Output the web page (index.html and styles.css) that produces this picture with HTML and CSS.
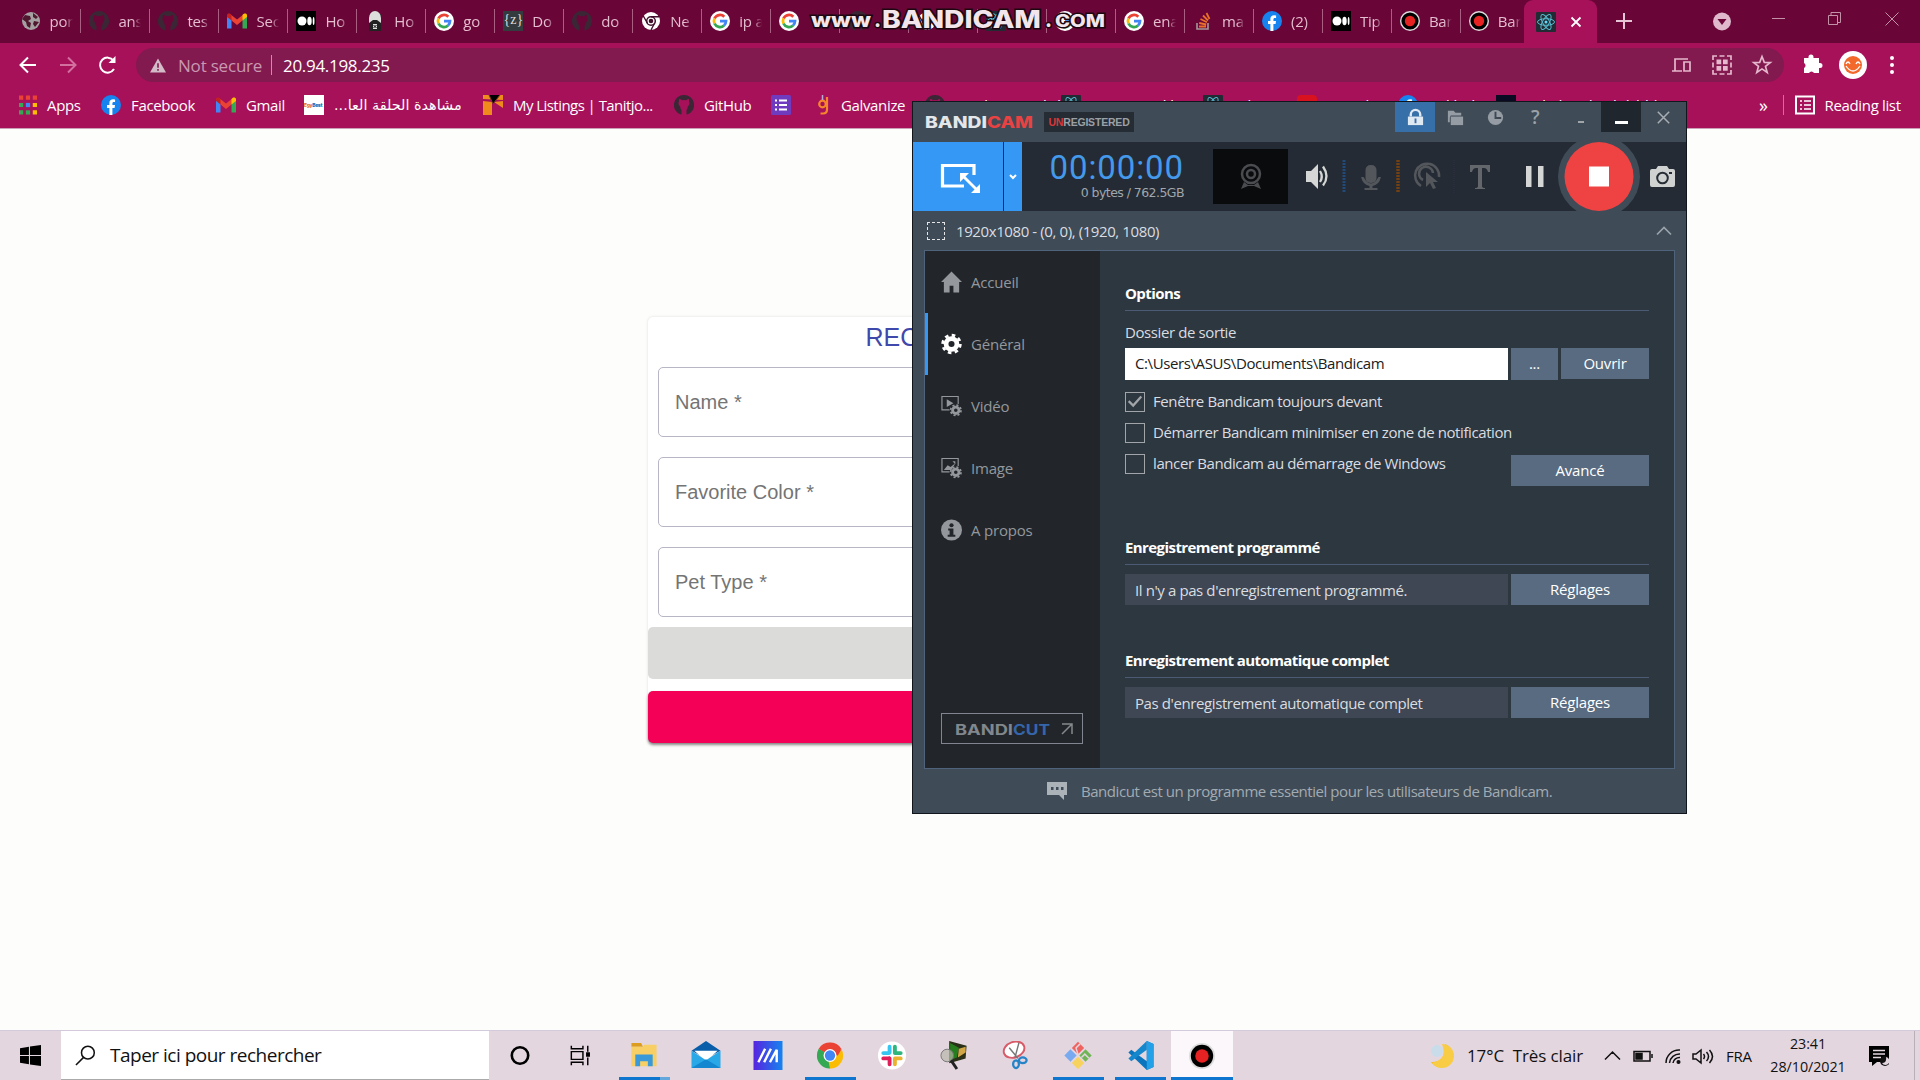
FILE: index.html
```html
<!DOCTYPE html>
<html lang="fr">
<head>
<meta charset="utf-8">
<title>20.94.198.235</title>
<link rel="stylesheet" href="styles.css">
</head>
<body>
<svg class="defs" aria-hidden="true">
  <symbol id="github" viewBox="0 0 20 20"><path fill="#3a2634" d="M10 0a10 10 0 0 0-3.200 19.500c.5.100.7-.2.7-.5v-4c-1-1.300-1.300-2-1-3C4.500 10 4 8 5 6.500c-.2-.9-.1-1.800.2-2.500 1 0 2 .6 2.600 1.200a9 9 0 0 1 4.400 0C13 4.600 14 4 14.800 4c.3.700.4 1.600.2 2.500 1 1.500.5 3.500-1.500 5.500.3 1 0 1.700-1 3v4c0 .3.200.6.700.5A10 10 0 0 0 10 0z"/></symbol>
  <symbol id="gmail" viewBox="0 0 20 16"><path fill="#4285f4" d="M0 2v13.500h4.500V6z"/><path fill="#34a853" d="M20 2v13.500h-4.500V6z"/><path fill="#ea4335" d="M3 1l7 5.500L17 1l-1.500 6.500L10 12 4.500 7.500z"/><path fill="#c5221f" d="M0 2.500C0 .5 2 0 3.500 1l1 1v5.500L0 4z"/><path fill="#fbbc04" d="M20 2.500C20 .5 18 0 16.500 1l-1 1v5.500L20 4z"/></symbol>
  <symbol id="google" viewBox="0 0 20 20"><circle cx="10" cy="10" r="10" fill="#fff"/><g fill="none" stroke-width="2.800"><path stroke="#ea4335" d="M4.500 7.500A6 6 0 0 1 14.300 5.800"/><path stroke="#fbbc04" d="M4.500 12.500a6 6 0 0 1 0-5"/><path stroke="#34a853" d="M14 14.500a6 6 0 0 1-9.500-2"/><path stroke="#4285f4" d="M10 10.200h6a6 6 0 0 1-2 4.300"/></g></symbol>
  <symbol id="medium" viewBox="0 0 20 20"><path d="M0 0h20v20H0z"/><circle cx="6" cy="10" r="4.500" fill="#fff"/><ellipse cx="13.500" cy="10" rx="2.200" ry="4.300" fill="#fff"/><ellipse cx="17.600" cy="10" rx=".9" ry="4" fill="#fff"/></symbol>
  <symbol id="rec" viewBox="0 0 20 20"><circle cx="10" cy="10" r="10" fill="#ddd"/><circle cx="10" cy="10" r="8.600"/><circle cx="10" cy="10" r="5.200" fill="#e62222"/></symbol>
  <symbol id="fb" viewBox="0 0 20 20"><circle cx="10" cy="10" r="10" fill="#1683ee"/><path fill="#fff" d="M8.400 20v-7H6v-3h2.400V8c0-2.600 1.500-3.800 3.700-3.800l2 .2V7h-1.200c-1.200 0-1.500.7-1.500 1.400V10H14l-.4 3h-2.200v7z"/></symbol>
  <symbol id="react" viewBox="0 0 20 20"><rect width="20" height="20" rx="1" fill="#222b33"/><g fill="none" stroke="#56bcd0" stroke-width="1"><ellipse cx="10" cy="10" rx="8.500" ry="3.300"/><ellipse cx="10" cy="10" rx="8.500" ry="3.300" transform="rotate(60 10 10)"/><ellipse cx="10" cy="10" rx="8.500" ry="3.300" transform="rotate(120 10 10)"/></g><circle cx="10" cy="10" r="1.500" fill="#61dafb"/></symbol>
  <symbol id="chrome" viewBox="0 0 20 20"><path fill="#ea4335" d="M10 10L1.340 5a10 10 0 0 1 17.320 0z"/><path fill="#fbbc04" d="M10 10l8.660-5A10 10 0 0 1 10 20z"/><path fill="#34a853" d="M10 10v10A10 10 0 0 1 1.340 5z"/><path fill="#ea4335" d="M10 5.200h8.700L16 10h-3z"/><path fill="#34a853" d="M6 7.500L1.340 5 5 12l3 2z"/><path fill="#fbbc04" d="M14.300 7.500L10 20 9 15z"/><circle cx="10" cy="10" r="4.900" fill="#fff"/><circle cx="10" cy="10" r="3.900" fill="#4285f4"/></symbol>
  <symbol id="chromew" viewBox="0 0 20 20"><circle cx="10" cy="10" r="9" fill="#fff"/><circle cx="10" cy="10" r="4.300" fill="none" stroke="#42102c" stroke-width="1.500"/><circle cx="10" cy="10" r="2.300" fill="#42102c"/><path stroke="#42102c" stroke-width="1.400" d="M10 5.700h8M6.300 12L2.300 5M13.700 12L10 19"/></symbol>
  <symbol id="gear" viewBox="0 0 22 22"><circle cx="11" cy="11" r="5.700" fill="none" stroke="currentColor" stroke-width="5"/><circle cx="11" cy="11" r="9.200" fill="none" stroke="currentColor" stroke-width="3" stroke-dasharray="3.700 3.520"/></symbol>
</svg>

<header class="browser">
  <div class="tabs">
    <div class="tab"><svg class="fav" viewBox="0 0 20 20"><circle cx="10" cy="10" r="9" fill="#a5a0a2"/><path fill="#50182f" d="M4 4l5 1 1 3-3 2 3 2-1 5-3-2-1-4-4-3zM12 2l5 4-2 2-3-2zM13 10l5 1-4 5-2-3z"/></svg><span>por</span></div>
    <div class="tab"><svg class="fav"><use href="#github"/></svg><span>ans</span></div>
    <div class="tab"><svg class="fav"><use href="#github"/></svg><span>tes</span></div>
    <div class="tab"><svg class="fav"><use href="#gmail"/></svg><span>Sec</span></div>
    <div class="tab"><svg class="fav"><use href="#medium"/></svg><span>Ho</span></div>
    <div class="tab"><svg class="fav" viewBox="0 0 20 20"><path d="M4 3h12v17H4z" fill="#222"/><path fill="#ddd" d="M4 7a6 7 0 0 1 12 0v5l-4-3H8l-4 3z"/><path d="M8 13h4v5H8z" fill="#ddd"/><path stroke="#111" d="M8.500 14l3 3m0-3l-3 3"/></svg><span>Ho</span></div>
    <div class="tab"><svg class="fav"><use href="#google"/></svg><span>go</span></div>
    <div class="tab"><i class="fav zf">{z}</i><span>Do</span></div>
    <div class="tab"><svg class="fav"><use href="#github"/></svg><span>do</span></div>
    <div class="tab"><svg class="fav"><use href="#chromew"/></svg><span>Ne</span></div>
    <div class="tab"><svg class="fav"><use href="#google"/></svg><span>ip a</span></div>
    <div class="tab"><svg class="fav"><use href="#google"/></svg></div>
    <div class="tab"><svg class="fav"><use href="#github"/></svg></div>
    <div class="tab"><svg class="fav"><use href="#chromew"/></svg></div>
    <div class="tab"><svg class="fav"><use href="#react"/></svg></div>
    <div class="tab"><svg class="fav"><use href="#google"/></svg></div>
    <div class="tab"><svg class="fav"><use href="#google"/></svg><span>ena</span></div>
    <div class="tab"><svg class="fav" viewBox="0 0 20 20"><path fill="none" stroke="#a39a98" stroke-width="1.600" d="M4 12v6h11v-6"/><path stroke="#e8702a" stroke-width="1.800" d="M6 15.500h7M6.200 12l7 1.500M7.500 8l6.500 3.200M10 4.500l5 5M13.500 2l3 6"/></svg><span>ma</span></div>
    <div class="tab"><svg class="fav"><use href="#fb"/></svg><span>(2)</span></div>
    <div class="tab"><svg class="fav"><use href="#medium"/></svg><span>Tip</span></div>
    <div class="tab"><svg class="fav"><use href="#rec"/></svg><span>Ban</span></div>
    <div class="tab last"><svg class="fav"><use href="#rec"/></svg><span>Ban</span></div>
    <div class="tab active"><svg class="fav"><use href="#react"/></svg><svg class="close" viewBox="0 0 12 12"><path d="M1.500 1.500l9 9m0-9l-9 9" stroke="#fff" stroke-width="1.800"/></svg></div>
    <svg class="plus" viewBox="0 0 16 16"><path d="M8 0v16M0 8h16" stroke="#e6c6d6" stroke-width="2"/></svg>
    <svg class="winctl" viewBox="0 0 200 42"><circle cx="22" cy="21.500" r="9" fill="#dfb8cc"/><path fill="#6a0638" d="M17.500 19h9l-4.500 6z"/><g fill="none" stroke="#c392a9" stroke-width="1"><path d="M72 18.500h13M128.500 15.500h9v9h-9zM131 15v-2.500h9.500v10H138M185.500 12.500l13 13m0-13l-13 13"/></g></svg>
    <div class="watermark"><svg viewBox="0 0 300 30"><g class="wm"><text x="4" y="24" font-size="20" textLength="60" lengthAdjust="spacingAndGlyphs">www</text><text x="67" y="24" font-size="20">.</text><text x="75" y="25" font-size="24" textLength="159" lengthAdjust="spacingAndGlyphs">BANDICAM</text><text x="238" y="24" font-size="20">.</text><text x="248" y="24" font-size="17" textLength="50" lengthAdjust="spacingAndGlyphs">COM</text></g></svg></div>
  </div>

  <div class="toolbar">
    <svg class="nav" viewBox="0 0 120 36" fill="none" stroke="#fff" stroke-width="2"><path d="M20 18H5M12 10.500L4.500 18l7.500 7.500"/><path stroke="#d3709e" d="M44 18h15M52 10.500l7.500 7.500-7.500 7.500"/><path d="M98 22a7.500 7.500 0 1 1-.5-8.500"/><path fill="#fff" stroke="none" d="M99.500 9v7h-7z"/></svg>
    <div class="omnibox">
      <svg class="warn" viewBox="0 0 18 16"><path fill="#d3bcc8" d="M9 0l9 16H0z"/><path stroke="#82194f" stroke-width="1.800" d="M9 5.500v5M9 12v2"/></svg>
      <span class="notsec">Not secure</span><i></i><span class="ip">20.94.198.235</span>
      <svg class="omni-icons" viewBox="0 0 100 24" fill="none" stroke="#e5b8cd" stroke-width="1.700"><path d="M18 6H5v12M2 18h10M14 9h6v9h-6z"/><path d="M43 7V3h4M57 3h4v4M43 17v4h4M57 21h4v-4M43 9.500v5M61 9.500v5M49.500 3h5M49.500 21h5"/><path fill="#e5b8cd" stroke="none" d="M46.500 6.500h4.700v4.700h-4.700zM53 6.500h4.700v4.700H53zM46.500 13h4.700v4.700h-4.700zM53 13h4.700v4.700H53z"/><path d="M92 3.500l2.300 5.900 6 .2-4.800 3.800 1.700 6-5.200-3.500-5.200 3.500 1.700-6-4.800-3.800 6-.2z"/></svg>
    </div>
    <svg class="ext" viewBox="0 0 120 36"><path fill="#fff" d="M19 15h4.500v-1a2.500 2.500 0 0 1 5 0v1H34v5h1a2.500 2.500 0 0 1 0 5h-1v5h-5a2.800 2.800 0 0 0-5 0h-5v-5a2.800 2.800 0 0 0 0-5z" transform="translate(1 -4)"/><circle cx="69" cy="18" r="14" fill="#fff"/><circle cx="69" cy="18" r="9" fill="#f3692c"/><path fill="none" stroke="#fff" stroke-width="1.300" d="M62 17q2-4 4 0M72 17q2-4 4 0M62 19q7 10 14 0"/><g fill="#fff"><circle cx="108" cy="11" r="2"/><circle cx="108" cy="18" r="2"/><circle cx="108" cy="25" r="2"/></g></svg>
  </div>

  <nav class="bookmarks">
    <div class="bm"><svg class="ic apps" viewBox="0 0 17 18"><path fill="#ea4335" d="M0 0h4v4H0zM6.500 0h4v4h-4zM13 0h4v4h-4z"/><path fill="#34a853" d="M0 7h4v4H0zM0 14h4v4H0z"/><path fill="#4285f4" d="M6.500 7h4v4h-4z"/><path fill="#fbbc04" d="M13 7h4v4h-4zM13 14h4v4h-4z"/><path fill="#34a853" d="M6.500 14h4v4h-4z"/></svg><span>Apps</span></div>
    <div class="bm"><svg class="ic"><use href="#fb"/></svg><span>Facebook</span></div>
    <div class="bm"><svg class="ic"><use href="#gmail"/></svg><span>Gmail</span></div>
    <div class="bm"><i class="ic egy">Egy<b>Best</b></i><span class="ar" dir="rtl">مشاهدة الحلقة العا...</span></div>
    <div class="bm"><svg class="ic" viewBox="0 0 20 20"><path fill="#ef8b1c" d="M0 0h20v5L0 4zM0 6l9 1v13H0zM11 7l9-1v7z"/><path stroke="#7a3a28" d="M6 0l4 9 7-9"/></svg><span class="tight">My Listings | Tanitjo...</span></div>
    <div class="bm"><svg class="ic"><use href="#github"/></svg><span>GitHub</span></div>
    <div class="bm"><svg class="ic" viewBox="0 0 20 20"><rect width="20" height="20" rx="1.500" fill="#6f3cc0"/><path stroke="#fff" stroke-width="2.200" d="M4 5.500h2M8 5.500h8M4 10h2M8 10h8M4 14.500h2M8 14.500h8"/></svg></div>
    <div class="bm"><svg class="ic gal" viewBox="0 0 15 20" fill="none" stroke="#f5862c" stroke-width="2.200"><circle cx="7" cy="9" r="3.300"/><path d="M11.500 2v12.500q0 4-4 4H5"/><path stroke="#b9a9d8" stroke-width="1.500" d="M7 0v5"/></svg><span>Galvanize</span></div>
    <div class="bm"><svg class="ic"><use href="#github"/></svg><span>&nbsp; mohaimenabd</span></div>
    <div class="bm"><svg class="ic"><use href="#react"/></svg><span>&nbsp; react weekly</span></div>
    <div class="bm"><svg class="ic"><use href="#react"/></svg><span>Nike.js</span></div>
    <div class="bm"><svg class="ic" viewBox="0 0 20 20"><rect width="20" height="20" rx="4" fill="#d8131f"/></svg><span>youtube</span></div>
    <div class="bm"><svg class="ic"><use href="#fb"/></svg><span>Ankh di</span></div>
    <div class="bm"><svg class="ic" viewBox="0 0 20 20"><path fill="#0a0a22" d="M0 0h20v20H0z"/></svg><span>Cykid And Wikdshbb</span></div>
    <div class="bm"><span class="more">»</span><i class="vline"></i><svg class="ic" viewBox="0 0 20 20" fill="none" stroke="#fff" stroke-width="2"><path d="M1 1.500h18v17H1z"/><path d="M5 6h2M9 6h7M5 10h2M9 10h7M5 14h2M9 14h7" stroke-width="1.700"/></svg><span>Reading list</span></div>
  </nav>
</header>

<main class="page">
  <form class="card">
    <h1>RECORD FORM</h1>
    <div class="field">Name *</div>
    <div class="field">Favorite Color *</div>
    <div class="field">Pet Type *</div>
    <div class="btn grey"></div>
    <div class="btn pink"></div>
  </form>
</main>

<section class="bandi">
  <div class="b-title">
    <svg class="b-logo" viewBox="0 0 110 20"><text y="16" font-size="15.500" fill="#e4e7ea" textLength="62" lengthAdjust="spacingAndGlyphs">BANDI</text><text x="62" y="16" font-size="15.500" fill="#e84243" textLength="46" lengthAdjust="spacingAndGlyphs">CAM</text></svg>
    <span class="unreg"><b>UN</b>REGISTERED</span>
    <div class="b-icons">
      <i class="on"><svg viewBox="0 0 20 20"><path fill="#dfe9f2" d="M2 9h16v9H2z"/><path fill="none" stroke="#dfe9f2" stroke-width="2.500" d="M5 9V7a5 5 0 0 1 10 0v2"/><path stroke="#3f6fa6" stroke-width="2" d="M10 11v5"/></svg></i>
      <i><svg viewBox="0 0 20 20" fill="#959ca3"><path d="M2 3h6l2 2h6v3H5l-1 2v5H2z"/><path d="M5 9h13v9H5z"/></svg></i>
      <i><svg viewBox="0 0 20 20"><circle cx="10" cy="10" r="8" fill="#959ca3"/><path fill="none" stroke="#3d4854" stroke-width="2" d="M10 4v6.500h6"/></svg></i>
      <i class="q">?</i>
      <i class="dash"></i>
      <i class="min"></i>
      <i><svg viewBox="0 0 20 20"><path stroke="#a8adb3" stroke-width="1.600" d="M4 4l12 12M16 4L4 16"/></svg></i>
    </div>
  </div>

  <div class="b-tools">
    <div class="target"><svg viewBox="0 0 40 32"><path fill="none" stroke="#fff" stroke-width="3.200" d="M34 13V3.500H2.500V24H24"/><path stroke="#fff" stroke-width="2.800" d="M23 14l14 14"/><path fill="#fff" d="M20 11h9l-9 9zM40 31h-9l9-9z"/></svg></div>
    <div class="drop"><svg viewBox="0 0 10 8"><path fill="none" stroke="#fff" stroke-width="2" d="M2 2l3 3 3-3"/></svg></div>
    <div class="clock"><div class="time">00:00:00</div><div class="size">0 bytes / 762.5GB</div></div>
    <div class="cam"><svg viewBox="0 0 24 28" fill="none" stroke="#4a4c50" stroke-width="2.500"><circle cx="12" cy="11" r="9"/><circle cx="12" cy="11" r="4"/><path fill="#4a4c50" stroke="none" d="M5 19l-3 7 7-3h6l7 3-3-7-4 3H9z"/></svg></div>
    <svg class="tools" viewBox="0 0 398 69">
      <path fill="#d5d7d6" d="M17 29h5l7-7v25l-7-7h-5z"/><path fill="none" stroke="#d5d7d6" stroke-width="2.300" d="M31 29q3.500 5.500 0 11M34 24.500q7 10 0 19"/>
      <path stroke="#224a78" stroke-width="3" stroke-dasharray="2 1" d="M55 18v33"/>
      <g fill="#53575c"><rect x="76.500" y="23" width="11" height="18" rx="5"/><path d="M72 35h2.500q7.500 13 15 0H92q-2 8-8.500 9v2h5v2h-13v-2h5v-2Q74 43 72 35z"/></g>
      <path stroke="#714013" stroke-width="3.500" stroke-dasharray="2 1" d="M109 18v33"/>
      <g fill="none" stroke="#53575c" stroke-width="2.500"><path d="M132 44a12 12 0 1 1 18-9M134 38a7 7 0 1 1 10-7"/><path fill="#53575c" stroke="none" d="M137 30l12 10h-5l3 6-3 1-3-6-4 4z"/></g>
      <path stroke="#33304b" stroke-dasharray="1 1" d="M165 18v33"/>
      <path fill="#63676b" d="M181 23h20v7h-2q-1-4-4-4h-2v18q0 2 3 2v1h-10v-1q3 0 3-2V26h-2q-3 0-4 4h-2z"/>
      <path fill="#d5d7d6" d="M237 24h5.500v21H237zM249 24h5.500v21H249z"/>
      <circle cx="310" cy="34.500" r="41" fill="#3f4b57"/><circle cx="310" cy="34.500" r="34.500" fill="#ef4343"/><path fill="#fff" d="M300 24.500h20v20h-20z"/>
      <path fill="#cfd2d0" d="M361 29q0-2 2-2h4l2-3h9l2 3h4q2 0 2 2v14q0 2-2 2h-21q-2 0-2-2z"/><circle cx="373.500" cy="36" r="5.300" fill="none" stroke="#262d35" stroke-width="2"/><path fill="#262d35" d="M380 30h3v2h-3z"/>
    </svg>
  </div>

  <div class="b-info"><i></i><span>1920x1080 - (0, 0), (1920, 1080)</span><svg viewBox="0 0 16 10"><path fill="none" stroke="#9ba3ab" stroke-width="1.700" d="M1 8.500l7-7 7 7"/></svg></div>

  <div class="b-panel">
    <aside>
      <div class="item"><svg viewBox="0 0 22 22"><path fill="currentColor" d="M11 0L0 11h3v11h6v-7h4v7h6V11h3z"/></svg>Accueil</div>
      <div class="item sel"><svg><use href="#gear"/></svg>Général</div>
      <div class="item"><svg viewBox="0 0 22 22"><path fill="none" stroke="currentColor" stroke-width="1.200" d="M18 9V1H1v14h8"/><path fill="currentColor" d="M6 4l7 4-7 4z"/><use href="#gear" x="9" y="9" width="13" height="13"/></svg>Vidéo</div>
      <div class="item"><svg viewBox="0 0 22 22"><path fill="none" stroke="currentColor" stroke-width="1.200" d="M18 9V1H1v14h8"/><path fill="currentColor" d="M3 13l4-5 3 2 5-4-4 7zM12 4h3v3z"/><use href="#gear" x="9" y="9" width="13" height="13"/></svg>Image</div>
      <div class="item"><svg viewBox="0 0 22 22"><circle cx="11" cy="11" r="11" fill="currentColor"/><circle cx="11" cy="6" r="2.200" fill="#22262b"/><path fill="#22262b" d="M7.500 9.500H13V16h2v2H7v-2h2v-4.500H7.500z"/></svg>A propos</div>
      <div class="cut"><svg viewBox="0 0 96 14"><text y="12.500" font-size="14" fill="#81878d" textLength="58" lengthAdjust="spacingAndGlyphs">BANDI</text><text x="58" y="12.500" font-size="14" fill="#3566ab" textLength="37" lengthAdjust="spacingAndGlyphs">CUT</text></svg><svg class="arr" viewBox="0 0 12 12"><path fill="none" stroke="#85898c" stroke-width="1.500" d="M1 1h10v10M11 1L1 11"/></svg></div>
    </aside>
    <div class="content">
      <h2>Options</h2>
      <p>Dossier de sortie</p>
      <div class="row"><div class="input">C:\Users\ASUS\Documents\Bandicam</div><div class="bt dots">...</div><div class="bt open">Ouvrir</div></div>
      <div class="checks">
        <div>
          <label><i class="ck"><svg viewBox="0 0 20 20"><path fill="none" stroke="#a1a5aa" stroke-width="2.500" d="M3 9l5 5 9-10"/></svg></i><span>Fenêtre Bandicam toujours devant</span></label>
          <label><i class="ck"></i><span>Démarrer Bandicam minimiser en zone de notification</span></label>
          <label><i class="ck"></i><span>lancer Bandicam au démarrage de Windows</span></label>
        </div>
        <div class="bt adv">Avancé</div>
      </div>
      <h2 class="h2b">Enregistrement programmé</h2>
      <div class="row r2"><div class="ro">Il n'y a pas d'enregistrement programmé.</div><div class="bt">Réglages</div></div>
      <h2 class="h2c">Enregistrement automatique complet</h2>
      <div class="row r2"><div class="ro">Pas d'enregistrement automatique complet</div><div class="bt">Réglages</div></div>
    </div>
  </div>
  <div class="b-foot"><svg viewBox="0 0 20 18"><path fill="#abb3b8" d="M0 0h20v13h-3v5l-5-5H0z"/><path fill="#3f4b57" d="M4 5h2.500v3H4zM9 5h2.500v3H9zM14 5h2.500v3H14z"/></svg><span>Bandicut est un programme essentiel pour les utilisateurs de Bandicam.</span></div>
</section>

<footer class="taskbar">
  <div class="start"><svg viewBox="0 0 20 20"><path d="M0 3l8.500-1.300v7.800H0zM9.500 1.500L20 0v9.500H9.500zM0 10.500h8.500v7.800L0 17zM9.500 10.500H20V20L9.500 18.500z"/></svg></div>
  <div class="search"><svg viewBox="0 0 22 22" fill="none" stroke="#111" stroke-width="1.600"><circle cx="13.500" cy="8" r="6.700"/><path d="M9 13l-8 8"/></svg><span>Taper ici pour rechercher</span></div>
  <div class="apps-row">
    <i><svg viewBox="0 0 30 30"><circle cx="15" cy="15" r="8.500" fill="none" stroke="#000" stroke-width="2.700"/></svg></i>
    <i><svg class="tv" viewBox="0 0 30 30" fill="none" stroke="#000" stroke-width="1.500"><path d="M5 5v3h12V5M5 25v-3h12v3M5 11h12v8H5zM22 5v6M22 17v8"/><path d="M21 12.500h2.500v3H21z" fill="#000"/></svg></i>
    <i class="run half"><svg viewBox="0 0 30 30"><path fill="#dc9c1f" d="M2 2h10l2 4H2z"/><path fill="#f7cf65" d="M2 6h12l1-2h13v22H2z"/><path fill="#3a9ad9" d="M6 14h18v12h-5v-5h-8v5H6z"/></svg></i>
    <i><svg viewBox="0 0 30 30"><path fill="#0a5da8" d="M15 0l15 10-15 8L0 10z"/><path fill="#fff" d="M3 10h24L15 21z"/><path fill="#29a8e8" d="M0 10l15 10 15-10v18H0z"/><path fill="#1387cf" d="M0 28l15-9 15 9z"/></svg></i>
    <i><svg viewBox="0 0 30 30"><defs><linearGradient id="ag" x2="1"><stop stop-color="#5823e0"/><stop offset="1" stop-color="#1684ef"/></linearGradient></defs><path fill="url(#ag)" d="M0 0h30v30H0z"/><path fill="none" stroke="#fff" stroke-width="2.500" d="M5 22l7-14M11 22l7-14M17 22l7-13v13"/></svg></i>
    <i class="run"><svg viewBox="-1 -1 22 22"><use href="#chrome" width="20" height="20"/></svg></i>
    <i><svg viewBox="0 0 30 30"><circle cx="15" cy="15" r="14.500" fill="#fff"/><g stroke-width="4" stroke-linecap="round"><path stroke="#36c5f0" d="M12.500 6v6M6 12.500h6"/><path stroke="#2eb67d" d="M18 6v6M18 12.500h6"/><path stroke="#e01e5a" d="M12.500 18v6M6 18h6"/><path stroke="#ecb22e" d="M18 18v6M18 18h6"/></g></svg></i>
    <i><svg viewBox="0 0 30 30"><path fill="#2b3018" d="M10 0l18 5-1 13-17 5z"/><path fill="#267d1d" d="M11 2l9 5-2 10-7 3z"/><path fill="#d1a646" d="M20 8l7-2v6l-8 5z"/><circle cx="8" cy="15" r="6.500" fill="#b8b6a9" fill-opacity=".7" stroke="#777"/><path stroke="#222" stroke-width="3" d="M12 20l6 9"/></svg></i>
    <i><svg viewBox="0 0 30 30"><ellipse cx="13" cy="9" rx="11" ry="8" fill="#fff" stroke="#d75b68" stroke-width="2" transform="rotate(-20 13 9)"/><path stroke="#777" stroke-width="1.500" d="M18 2l-4 15M8 7l9 11"/><g fill="none" stroke="#2583c8" stroke-width="2.300"><ellipse cx="15" cy="24" rx="3" ry="4"/><ellipse cx="22" cy="20" rx="4" ry="3"/></g></svg></i>
    <i class="run"><svg viewBox="0 0 30 30"><g transform="rotate(45 15 15)"><path fill="#ef6461" d="M5 5h9v9H5z"/><path fill="#6fb556" d="M16 5h9v9h-9z"/><path fill="#79aaf0" d="M5 16h9v9H5z"/><path fill="#f7d35e" d="M16 16h9v9h-9z"/><path fill="none" stroke="#e4d6df" stroke-width="1.500" d="M8 5v6l6 3M19 14V9h6"/></g></svg></i>
    <i class="run"><svg viewBox="0 0 30 30"><path fill="#0a75bd" d="M22 0l7 3v24l-7 3L3 12l3-3 16 12z"/><path fill="#22a0e8" d="M22 0l7 3v24l-7 3z"/><path fill="#1587cc" d="M3 18l3 3L22 9V0z"/></svg></i>
    <i class="run cur"><svg><use href="#rec"/></svg></i>
  </div>
  <div class="tray">
    <svg class="moon" viewBox="0 0 24 24"><path fill="#f5b822" d="M15 0a12 12 0 1 1-14 18C11 19 17 10 15 0z"/><path fill="#f8cd45" d="M12 0a12 12 0 0 1 0 24 12 12 0 0 1-10-5Q18 16 12 0z"/><circle cx="7" cy="7" r="6" fill="#c9dce9"/></svg>
    <span class="wx">17°C&nbsp; Très clair</span>
    <svg class="ticons" viewBox="0 0 112 24" fill="none" stroke="#111" stroke-width="1.500"><path d="M1 15.500L8.500 8l7.500 7.500M30 7.500h16v9.500H30zM48 10v4"/><path fill="#111" d="M32 9.500h6v5.500h-6z"/><path d="M62 19A13 13 0 0 1 76 6M65.500 19A10 10 0 0 1 76 10M69 19a6.500 6.500 0 0 1 7-5.500"/><circle cx="74.500" cy="18" r="1.300" fill="#111"/><path d="M89 10h3l5-4v13l-5-4h-3zM99.500 10q2 2.500 0 5M102.500 8q4 4.500 0 9M105.500 6q6 6.500 0 13"/></svg>
    <span class="lang">FRA</span>
    <div class="dt"><span>23:41</span><span>28/10/2021</span></div>
    <svg class="notif" viewBox="0 0 20 20"><path d="M0 0h20v16H8l-5 4v-4H0z"/><path stroke="#e4d6df" stroke-width="1.500" d="M4 4.500h12M4 8h12M4 11.500h8"/><circle cx="16" cy="15" r="5" fill="#111"/><path fill="#e4d6df" d="M17 11a4 4 0 1 1-4 6q5 0 4-6z"/></svg>
    <i class="peek"></i>
  </div>
</footer>
</body>
</html>
```
FILE: styles.css
```css
* { box-sizing: border-box; }
body { margin: 0; width: 1920px; height: 1080px; overflow: hidden; display: flex; flex-direction: column; position: relative; background: #fdfdfb; font-family: "Open Sans", "Noto Sans", sans-serif; white-space: nowrap; }
svg { display: block; flex: none; }
i { font-style: normal; display: block; flex: none; }
.defs { position: absolute; width: 0; height: 0; }

/* browser chrome */
.browser { height: 129px; background: #a6115a; border-bottom: 1px solid #c9a2b6; flex: none; }
.tabs { height: 43px; background: #690637; display: flex; align-items: center; padding: 0 0 1px 12.500px; position: relative; }
.tab { width: 68.980px; height: 24px; border-right: 1px solid #a85f82; display: flex; align-items: center; padding-left: 8px; flex: none; }
.tab.last { border: 0; }
.fav { width: 20px; height: 20px; margin-right: 9px; }
.tab span { width: 23px; overflow: hidden; font-size: 15px; letter-spacing: -.2px; color: #e5bed0; -webkit-mask-image: linear-gradient(90deg, #000 65%, transparent); mask-image: linear-gradient(90deg, #000 65%, transparent); }
.zf { background: #333b3e; color: #ddd; font: 14px/18px "Liberation Serif", serif; text-align: center; }
.tab.active { width: 73px; height: 43px; border: 0; border-radius: 9px 9px 0 0; background: #a6115a; margin: 0 0 -1px -6px; padding-left: 12px; }
.tab.active .fav { margin-right: 14px; }
.close { width: 12px; height: 12px; }
.plus { width: 16px; height: 16px; margin-left: 19px; }
.winctl { width: 200px; height: 42px; margin-left: auto; margin-right: 20px; }
.watermark { position: absolute; left: 807px; top: 3px; width: 300px; height: 30px; }
.wm { font-family: Inter, sans-serif; font-weight: 800; fill: #f2e6ec; stroke: #1c0610; stroke-width: 3px; paint-order: stroke; }
.toolbar { height: 44px; display: flex; align-items: center; padding-left: 16px; }
.nav { width: 120px; height: 36px; }
.omnibox { width: 1648px; height: 34px; border-radius: 17px; background: #82194f; display: flex; align-items: center; padding-left: 14px; font-size: 17px; }
.warn { width: 16px; height: 15px; margin-right: 12px; }
.notsec { color: #c998b1; width: 93px; letter-spacing: -.2px; }
.omnibox i { width: 1px; height: 20px; background: #c98dad; margin-right: 11px; }
.ip { color: #fff; letter-spacing: -.3px; }
.omni-icons { width: 100px; height: 24px; margin-left: auto; margin-right: 14px; overflow: visible; }
.ext { width: 120px; height: 36px; }
.bookmarks { height: 38px; display: grid; grid-template-columns: 82px 115px 88px 179px 191px 97px 44px 110px 136px 142px 94px 101px 98px 263px 1fr; padding: 0 0 2px 19px; color: #fff; font-size: 15px; letter-spacing: -.35px; }
.bm { display: flex; align-items: center; gap: 10px; min-width: 0; }
.ic { width: 20px; height: 20px; flex: none; }
.apps { width: 18px; }
.gal { width: 16px; }
.egy { background: #fff; font: 700 5px/20px Inter, sans-serif; color: #e05a24; }
.egy b { color: #2176c0; }
.ar { font-family: "DejaVu Sans", sans-serif; font-size: 14.400px; letter-spacing: 0; }
.tight { letter-spacing: -.55px; }
.more { font-size: 18px; margin-right: 5px; }
.vline { width: 1px; height: 20px; background: #cf6d9b; margin-right: 1px; }

/* page */
.page { flex: 1; display: flex; justify-content: center; align-items: flex-start; padding-top: 188px; }
.card { width: 624px; background: #fff; border-radius: 5px; box-shadow: 0 0 3px #ddd; font-family: "Liberation Sans", Arial, sans-serif; }
.card h1 { margin: 0 0 10px; height: 40px; line-height: 40px; font-size: 25px; font-weight: 400; text-align: center; color: #3f48ab; }
.field { height: 70px; margin: 0 10px 20px; border: 1px solid #b6b6c4; border-radius: 5px; padding-left: 16px; line-height: 68px; font-size: 20px; color: #747474; }
.btn { height: 52px; border-radius: 5px; }
.grey { background: #dbdbd9; margin: -10px 0 12px; }
.pink { background: #f50057; box-shadow: 0 2px 3px rgba(0,0,0,.45); }

/* recorder window */
.bandi { position: absolute; left: 912px; top: 101px; width: 775px; height: 713px; border: 1px solid #11161c; background: #3f4b57; display: flex; flex-direction: column; color: #dadde0; font-size: 15px; letter-spacing: -.4px; }
.b-title { height: 40px; display: flex; padding-left: 12px; }
.b-logo { width: 110px; height: 20px; margin-top: 10px; font-family: Inter, sans-serif; font-weight: 800; letter-spacing: 0; }
.unreg { width: 90px; height: 20px; margin: 10px 0 0 9px; background: #262c33; color: #9aa0a5; font: 600 10.5px/20px "Liberation Sans", sans-serif; text-align: center; letter-spacing: -.2px; }
.unreg b { color: #d8383b; }
.b-icons { display: flex; margin-left: auto; margin-right: 3px; height: 30px; }
.b-icons i { width: 40px; height: 30px; display: flex; align-items: center; justify-content: center; }
.b-icons svg { width: 19px; height: 19px; }
.b-icons .on { background: #376fa8; }
.q { color: #9aa1a7; font-weight: 600; font-size: 19px; }
.b-icons .dash { padding-left: 6px; width: 46px; }
.dash::after { content: ""; width: 6px; height: 2px; margin-top: 9px; background: #a0a5aa; }
.b-icons .min { background: #20262e; margin-right: 2px; }
.min::after { content: ""; width: 13px; height: 3px; margin-top: 10px; background: #fff; }
.b-tools { height: 69px; background: #242b34; display: flex; align-items: center; overflow: hidden; }
.target { width: 90px; height: 69px; background: #3598f5; display: grid; place-items: center; margin-right: 1px; padding: 2px 0 0 3px; flex: none; }
.target svg { width: 40px; height: 32px; }
.drop { width: 18px; height: 69px; background: #3598f5; display: grid; place-items: center; flex: none; }
.drop svg { width: 10px; height: 8px; }
.clock { width: 162px; text-align: right; flex: none; padding-top: 2px; }
.time { font: 400 33px/30px Roboto, sans-serif; letter-spacing: .9px; color: #4499ea; }
.size { font: 12.5px/20px "DejaVu Sans", sans-serif; color: #a0a6ac; letter-spacing: -.55px; }
.cam { width: 75px; height: 55px; margin-left: 29px; background: #090b0d; display: grid; place-items: center; flex: none; }
.cam svg { width: 24px; height: 28px; }
.tools { width: 398px; height: 69px; margin-left: 1px; }
.b-info { height: 39px; display: flex; align-items: center; padding: 1px 14px 0 14px; }
.b-info i { width: 18px; height: 18px; border: 1px dashed #e4e6e8; margin-right: 11px; }
.b-info svg { width: 16px; height: 10px; margin-left: auto; }
.b-panel { width: 751px; height: 519px; margin-left: 11px; border: 1px solid #50637c; display: flex; background: #2d3740; }
aside { width: 175px; background: #22262b; color: #a1a5a8; display: flex; flex-direction: column; letter-spacing: -.2px; }
.item { height: 62px; display: flex; align-items: center; gap: 9px; padding-left: 16px; color: #94989c; border-left: 0 solid #3598f5; }
.item svg { width: 21px; height: 22px; }
.sel { border-left-width: 3px; padding-left: 13px; }
.sel svg { color: #fff; }
.cut { width: 142px; height: 31px; margin: auto 0 24px 16px; border: 1px solid #808590; display: flex; align-items: center; padding-left: 13px; gap: 10px; letter-spacing: 0; }
.cut svg { width: 96px; height: 14px; font-family: Inter, sans-serif; font-weight: 700; }
.cut .arr { width: 12px; height: 12px; }
.content { width: 524px; margin-left: 25px; padding-top: 27px; }
h2 { margin: 0; height: 33px; border-bottom: 1px solid #4d5a76; line-height: 31px; font-size: 15px; font-weight: 700; color: #fff; letter-spacing: -.58px; }
.content p { margin: 8px 0 0; height: 29px; line-height: 26px; }
.row { display: flex; height: 32px; gap: 3px; }
.input { width: 383px; background: #fff; color: #202020; padding-left: 10px; line-height: 30px; }
.bt { width: 138px; height: 31px; background: #586b80; color: #fff; text-align: center; line-height: 30px; letter-spacing: -.2px; }
.dots { width: 47px; height: 32px; }
.open { width: 88px; }
.checks { display: flex; justify-content: space-between; height: 107px; padding-top: 6px; }
.checks label { height: 31px; display: flex; align-items: center; gap: 8px; }
.checks label span { padding-bottom: 2px; }
.ck { width: 20px; height: 20px; border: 1px solid #a1a5aa; }
.ck svg { width: 18px; height: 18px; }
.adv { margin-top: 69px; margin-left: -100px; }
.h2b { margin-top: 45px; }
.r2 { margin-top: 9px; height: 31px; }
.ro { width: 383px; background: #3e4753; padding-left: 10px; line-height: 32px; }
.h2c { margin-top: 40px; }
.b-foot { flex: 1; display: flex; align-items: center; padding-left: 134px; gap: 14px; color: #a3abb2; letter-spacing: -.45px; }
.b-foot svg { width: 20px; height: 18px; }

/* taskbar */
.taskbar { height: 50px; flex: none; background: #e4d6df; display: flex; border-top: 1px solid #d3cadb; color: #111; }
.start { width: 61px; display: grid; place-items: center; }
.start svg { width: 21px; height: 21px; }
.search { width: 428px; background: #fff; border-bottom: 1px solid #aaa; display: flex; align-items: center; gap: 14px; padding-left: 14px; font-size: 19px; letter-spacing: -.5px; }
.search svg { width: 21px; height: 21px; }
.apps-row { display: flex; }
.apps-row i { width: 62px; display: flex; align-items: center; justify-content: center; border-bottom: 3px solid transparent; background-clip: padding-box; padding-top: 3px; position: relative; }
.apps-row svg { width: 30px; height: 29px; }
.apps-row .tv { margin-right: 3px; }
.run::after { content: ""; position: absolute; left: 6px; right: 5px; bottom: -3px; height: 3px; background: #0f76d0; }
.half::after { background: linear-gradient(90deg, #0f76d0 80%, #62a8dd 80%); }
.cur { background: #fbf7fa; }
.cur::after { left: 0; right: 0; }
.apps-row .cur svg { width: 26px; height: 26px; }
.tray { margin-left: auto; display: flex; align-items: center; }
.moon { width: 24px; height: 24px; margin-right: 13px; }
.wx { font-size: 17px; width: 137px; letter-spacing: -.1px; }
.ticons { width: 112px; height: 24px; margin-right: 10px; }
.lang { font-size: 15px; width: 45px; letter-spacing: -.2px; }
.dt { width: 74px; display: flex; flex-direction: column; align-items: center; font-size: 14.300px; line-height: 23px; letter-spacing: -.05px; padding-bottom: 2px; }
.notif { width: 20px; height: 20px; margin: 0 25px 0 24px; }
.peek { width: 6px; height: 50px; border-left: 1px solid #b9afb7; }
```
